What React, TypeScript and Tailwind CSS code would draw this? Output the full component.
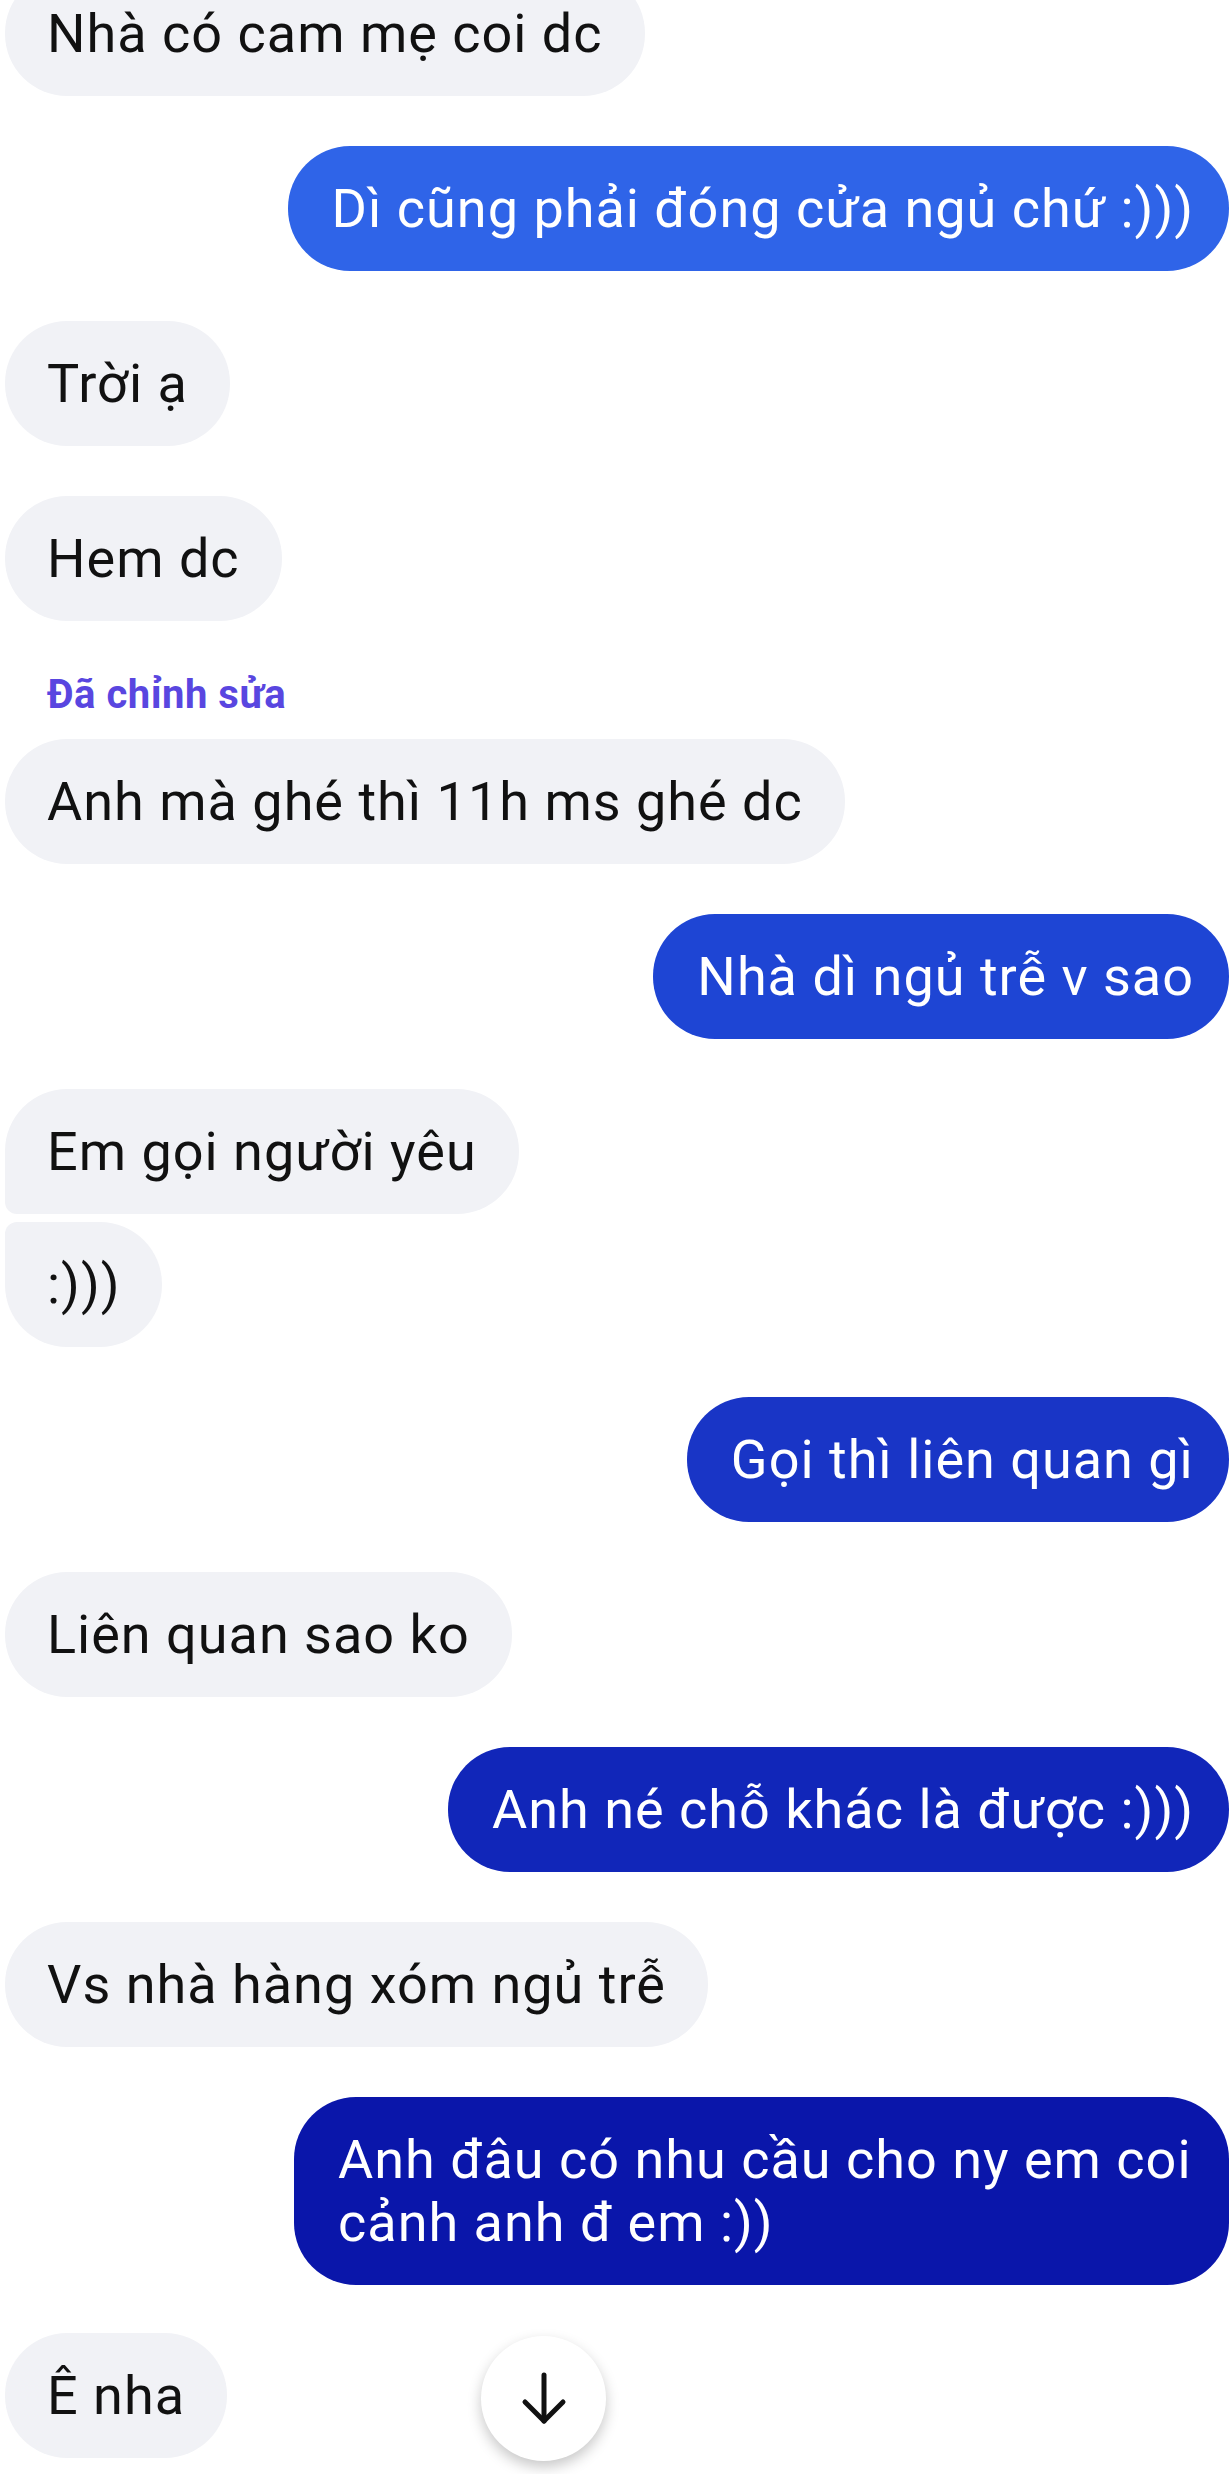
import React from "react";

type Msg = {
  text: string;
  mine?: boolean;
  color?: string;
  corner?: string;
  gap?: string;
  wrap?: boolean;
};

const messages: Msg[] = [
  { text: "Nhà có cam mẹ coi dc", gap: "mt-[-29px]" },
  { text: "Dì cũng phải đóng cửa ngủ chứ :)))", mine: true, color: "bg-[#2f64e8]" },
  { text: "Trời ạ" },
  { text: "Hem dc" },
];

const messages2: Msg[] = [
  { text: "Anh mà ghé thì 11h ms ghé dc", gap: "mt-[24px]" },
  { text: "Nhà dì ngủ trễ v sao", mine: true, color: "bg-[#1e45d4]" },
  { text: "Em gọi người yêu", corner: "rounded-bl-[12px]" },
  { text: ":)))", corner: "rounded-tl-[12px]", gap: "mt-[8px]" },
  { text: "Gọi thì liên quan gì", mine: true, color: "bg-[#1935c6]" },
  { text: "Liên quan sao ko" },
  { text: "Anh né chỗ khác là được :)))", mine: true, color: "bg-[#1126b9]" },
  { text: "Vs nhà hàng xóm ngủ trễ" },
  { text: "Anh đâu có nhu cầu cho ny em coi cảnh anh đ em :))", mine: true, color: "bg-[#0a16aa]", wrap: true },
  { text: "Ê nha", gap: "mt-[48px]" },
];

const Bubble = ({ m }: { m: Msg }) => (
  <div className={`flex ${m.mine ? "justify-end" : "justify-start pl-[5px]"} ${m.gap ?? "mt-[50px]"}`}>
    <div
      className={`py-[31px] text-[54px] leading-[63px] tracking-[1px] rounded-[62px] ${
        m.wrap ? "max-w-[935px]" : "whitespace-nowrap"
      } ${m.mine ? `${m.color} text-white pl-[44px] pr-[35px]` : "bg-[#f1f2f6] text-[#111] px-[42px]"} ${
        m.corner ?? ""
      }`}
    >
      {m.text}
    </div>
  </div>
);

export default function App() {
  return (
    <div
      className="relative h-[2474px] w-[1229px] overflow-hidden bg-white"
      style={{ fontFamily: "Roboto, 'Noto Sans', sans-serif" }}
    >
      <div className="flex flex-col">
        {messages.map((m, i) => (
          <Bubble key={i} m={m} />
        ))}

        {/* edited label */}
        <div className="mt-[54px] pl-[47px] text-[40px] leading-[40px] font-bold tracking-[0.5px] text-[#5946e0]">
          Đã chỉnh sửa
        </div>

        {messages2.map((m, i) => (
          <Bubble key={i} m={m} />
        ))}
      </div>

      {/* scroll to bottom button */}
      <button className="absolute left-[481px] top-[2336px] flex h-[125px] w-[125px] items-center justify-center rounded-full bg-white shadow-[0_6px_14px_rgba(0,0,0,0.22)]">
        <svg width="50" height="56" viewBox="0 0 50 56" fill="none" stroke="#111" strokeWidth="5" strokeLinecap="round" strokeLinejoin="round">
          <path d="M25 4v46" />
          <path d="M6 31l19 19 19-19" />
        </svg>
      </button>
    </div>
  );
}
